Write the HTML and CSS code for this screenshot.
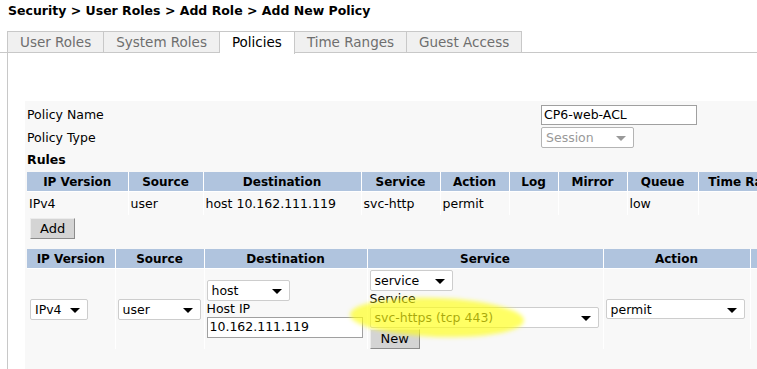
FILE: index.html
```html
<!DOCTYPE html>
<html lang="en">
<head>
  <meta charset="UTF-8" />
  <title>Add New Policy</title>
  <link rel="stylesheet" href="styles.css">
</head>
<body>

  <div class="crumb">Security &gt; User Roles &gt; Add Role &gt; Add New Policy</div>

  <!-- Tabs -->
  <div class="tabs">
    <div class="tab">User Roles</div>
    <div class="tab">System Roles</div>
    <div class="tab active">Policies</div>
    <div class="tab">Time Ranges</div>
    <div class="tab">Guest Access</div>
  </div>

  <div class="panel">
    <div class="form">

      <div class="field">
        <div class="field-label">Policy Name</div>
        <div class="input name-input">CP6-web-ACL</div>
      </div>
      <div class="field">
        <div class="field-label">Policy Type</div>
        <div class="select disabled type-select">Session<span class="caret"></span></div>
      </div>
      <div class="section-title">Rules</div>

      <!-- Existing rules -->
      <table class="grid rules">
        <colgroup>
          <col style="width:101px"><col style="width:75px"><col style="width:158px">
          <col style="width:79px"><col style="width:69px"><col style="width:49px">
          <col style="width:69px"><col style="width:71px"><col style="width:100px">
        </colgroup>
        <tr>
          <th>IP Version</th><th>Source</th><th>Destination</th><th>Service</th>
          <th>Action</th><th>Log</th><th>Mirror</th><th>Queue</th><th>Time Range</th>
        </tr>
        <tr>
          <td>IPv4</td><td>user</td><td>host 10.162.111.119</td><td>svc-http</td>
          <td>permit</td><td></td><td></td><td>low</td><td></td>
        </tr>
      </table>

      <div class="add-row"><button class="btn">Add</button></div>

      <!-- New rule editor -->
      <table class="grid editor">
        <colgroup>
          <col style="width:88px"><col style="width:89px"><col style="width:163px">
          <col style="width:236px"><col style="width:147px"><col style="width:60px">
        </colgroup>
        <tr>
          <th>IP Version</th><th>Source</th><th>Destination</th><th>Service</th><th>Action</th><th></th>
        </tr>
        <tr>
          <td><div class="select ip-select">IPv4<span class="caret"></span></div></td>
          <td><div class="select src-select">user<span class="caret"></span></div></td>
          <td>
            <div class="stack">
              <div class="select host-select">host<span class="caret"></span></div>
              <div class="stack-label">Host IP</div>
              <div class="input ip-input">10.162.111.119</div>
            </div>
          </td>
          <td>
            <div class="stack">
              <div class="select svc-type">service<span class="caret"></span></div>
              <div class="stack-label">Service</div>
              <div class="select svc-select">svc-https (tcp 443)<span class="caret"></span></div>
              <button class="btn new-btn">New</button>
            </div>
          </td>
          <td><div class="select action-select">permit<span class="caret"></span></div></td>
          <td></td>
        </tr>
      </table>

    </div>
  </div>

  <!-- marker highlight drawn over the service dropdown -->
  <div class="marker"></div>

</body>
</html>
```

FILE: styles.css
```css
:root {
  --line: #c8c8c8;
  --tab-bg: #f0f0f0;
  --area-bg: #f8f8f8;
  --head-bg: #b0c4de;
  --text: #000;
  --muted: #6e6e6e;
}

html, body {
  margin: 0;
  width: 757px;
  height: 369px;
  overflow: hidden;
}

body {
  font-family: "DejaVu Sans", Verdana, sans-serif;
  font-size: 12.5px;
  color: var(--text);
  background: #fff;
  position: relative;
}

.crumb {
  font-size: 12.5px;
  font-weight: bold;
  line-height: 16px;
  padding: 3px 0 0 8px;
  height: 31px;
  box-sizing: border-box;
}

/* Tabs */
.tabs {
  display: flex;
  padding-left: 7px;
  border-bottom: 1px solid var(--line);
  height: 21px;
}

.tab {
  font-size: 13.5px;
  line-height: 21px;
  color: var(--muted);
  background: var(--tab-bg);
  border: 1px solid var(--line);
  border-bottom: none;
  border-left: none;
  padding: 0 12px;
  white-space: nowrap;
}

.tab:first-child {
  border-left: 1px solid var(--line);
}

.tab.active {
  background: #fff;
  color: #000;
  height: 22px;
}

.panel {
  margin-left: 7px;
  border-left: 1px solid var(--line);
  height: 316px;
  box-sizing: border-box;
  padding: 48px 0 0 17px;
  overflow: hidden;
}

.form {
  background: var(--area-bg);
  height: 100%;
  box-sizing: border-box;
  padding: 2px 0 0 2px;
  overflow: hidden;
}

/* Policy fields */
.field {
  display: grid;
  grid-template-columns: 514px auto;
  align-items: center;
  height: 23px;
}

.field-label {
  line-height: 18px;
}

.section-title {
  font-weight: bold;
  line-height: 18px;
  height: 23px;
  padding-top: 2px;
  box-sizing: border-box;
}

.input {
  background: #fff;
  border: 1px solid #a0a0a0;
  height: 20px;
  box-sizing: border-box;
  line-height: 18px;
  padding-left: 2px;
  white-space: nowrap;
}

.name-input { width: 156px; }

.select {
  position: relative;
  background: #fff;
  border: 1px solid #cdcdcd;
  border-radius: 2px;
  height: 21px;
  box-sizing: border-box;
  line-height: 19px;
  padding-left: 4px;
  white-space: nowrap;
}

.caret {
  position: absolute;
  right: 7px;
  top: 8px;
  border-left: 5px solid transparent;
  border-right: 5px solid transparent;
  border-top: 5px solid #000;
}

.select.disabled {
  color: #999;
  border-color: #b4b4b4;
}

.select.disabled .caret { border-top-color: #999; }

.type-select { width: 93px; }

/* Tables */
.grid {
  border-collapse: collapse;
  table-layout: fixed;
}

.grid th,
.grid td {
  border-right: 1px solid #fff;
  padding: 0 2px;
  white-space: nowrap;
  overflow: hidden;
}

.grid th {
  background: var(--head-bg);
  font-size: 12px;
  font-weight: bold;
  text-align: center;
  height: 19px;
  border-bottom: 1px solid #fff;
  padding: 0;
  line-height: 18px;
}

.grid td {
  background: var(--area-bg);
}

.rules {
  width: 771px;
}

.rules td {
  height: 23px;
}

.add-row {
  padding: 3px 0 0 3px;
  height: 34px;
  box-sizing: border-box;
}

.btn {
  font-family: inherit;
  font-size: 13px;
  background: #d4d4d4;
  border: 1px solid #8c8c8c;
  border-top-color: #ececec;
  border-left-color: #ececec;
  height: 21px;
  padding: 0 9px;
  line-height: 18px;
  color: #000;
}

.editor {
  width: 783px;
}

.editor td {
  height: 80px;
  vertical-align: middle;
  padding: 0 2px;
}

.stack {
  display: flex;
  flex-direction: column;
  align-items: flex-start;
}

.stack-label {
  line-height: 16px;
}

.ip-select { width: 58px; margin-left: 1px; }
.src-select { width: 83px; }
.host-select { width: 83px; }
.ip-input { width: 156px; height: 21px; }
.svc-type { width: 83px; }
.svc-select { width: 229px; }
.new-btn { margin-top: 1px; height: 20px; padding: 0 10px; }
.action-select { width: 139px; height: 20px; }

/* marker highlight */
.marker {
  position: absolute;
  left: 350px;
  top: 298px;
  width: 174px;
  height: 39px;
  border-radius: 50%;
  background: rgba(255, 255, 20, 0.66);
  filter: blur(2px);
  transform: rotate(2deg);
  pointer-events: none;
}
```
